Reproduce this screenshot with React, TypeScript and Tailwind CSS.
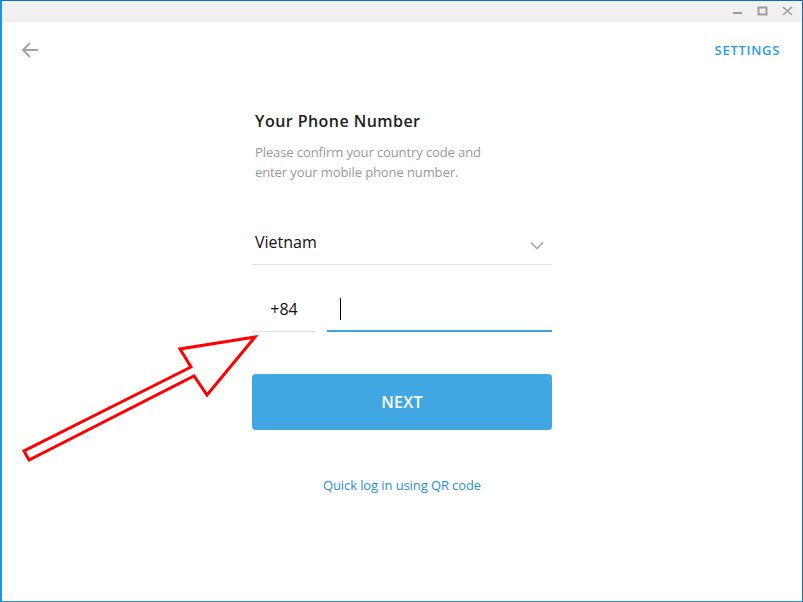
import React from 'react';

const font = { fontFamily: '"Open Sans", "Noto Sans", sans-serif' };

const BackArrow = () => (
    <svg width="18" height="18" viewBox="0 0 18 18" fill="none" stroke="#a3a3a3" strokeWidth="2">
        <path d="M2 9h15M9 2L2 9l7 7" />
    </svg>
);

const Chevron = () => (
    <svg width="14" height="9" viewBox="0 0 14 9" fill="none" stroke="#a8a8a8" strokeWidth="1.6">
        <path d="M1 1.5l6 6 6-6" />
    </svg>
);

const TitleButtons = () => (
    <div className="flex items-center gap-[13px] pr-[8px]">
        <svg width="12" height="12" viewBox="0 0 12 12">
            <rect x="1" y="6" width="9" height="2" fill="#9c9c9c" />
        </svg>
        <svg width="12" height="12" viewBox="0 0 12 12" fill="none" stroke="#9c9c9c" strokeWidth="2">
            <rect x="1.5" y="1.5" width="8" height="7" />
        </svg>
        <svg width="12" height="12" viewBox="0 0 12 12" fill="none" stroke="#9c9c9c" strokeWidth="1.6">
            <path d="M1 1l9 8M10 1L1 9" />
        </svg>
    </div>
);

// red annotation arrow pointing at the country code field
const RedArrow = () => (
    <svg className="absolute left-0 top-0 pointer-events-none" width="803" height="602">
        <polygon
            points="255,337 180,349 191,367 24,451 29,460 194,376 207,395"
            fill="white"
            stroke="#ff0000"
            strokeWidth="3"
            strokeLinejoin="miter"
        />
    </svg>
);

export default function App() {
    return (
        <div className="relative w-[803px] h-[602px] bg-white overflow-hidden" style={font}>
            <div className="flex flex-col w-full h-full border-t border-t-[#0a6fc9] border-l-2 border-l-[#1b95dd] border-r border-r-[#2a63a8] border-b border-b-[#2d8fd0]">
                <div className="h-[21px] shrink-0 bg-[#f0f0f0] flex items-center justify-end">
                    <TitleButtons />
                </div>

                <div className="flex items-center justify-between h-[56px] pl-[19px] pr-[22px]">
                    <BackArrow />
                    <span className="text-[13px] font-semibold text-[#2b9be0] tracking-[0.7px] mt-[1px]">SETTINGS</span>
                </div>

                <div className="flex flex-col w-[300px] mx-auto mt-[32px]">
                    <h1 className="pl-[3px] text-[16px] leading-[22px] font-semibold text-[#222] tracking-[0.45px]">Your Phone Number</h1>
                    <p className="pl-[3px] mt-[10px] text-[13px] leading-[20px] text-[#999] tracking-[-0.1px]">
                        Please confirm your country code and
                        <br />
                        enter your mobile phone number.
                    </p>

                    <div className="mt-[49px] flex items-center justify-between pl-[3px] pr-[8px] pb-[11px] border-b border-[#e1e1e1]">
                        <span className="text-[16px] leading-[22px] text-[#111]">Vietnam</span>
                        <span className="mt-[6px]"><Chevron /></span>
                    </div>

                    <div className="mt-[33px] flex items-end gap-[11px]">
                        <div className="w-[64px] border-b border-[#e1e1e1] pb-[11px] text-center text-[16px] leading-[22px] text-[#111]">+84</div>
                        <div className="flex-1 border-b-2 border-[#3ea3e0] pb-[10px] pl-[13px] h-[34px] flex items-end">
                            <span className="block w-[1px] h-[22px] bg-black" />
                        </div>
                    </div>

                    <button className="mt-[42px] h-[56px] w-full rounded-[4px] bg-[#40a7e3] text-white text-[16px] font-semibold tracking-[0.3px]">
                        NEXT
                    </button>

                    <a className="mt-[45px] text-center text-[13px] leading-[20px] text-[#2a8fd4] tracking-[-0.1px]">Quick log in using QR code</a>
                </div>
            </div>
            <RedArrow />
        </div>
    );
}
